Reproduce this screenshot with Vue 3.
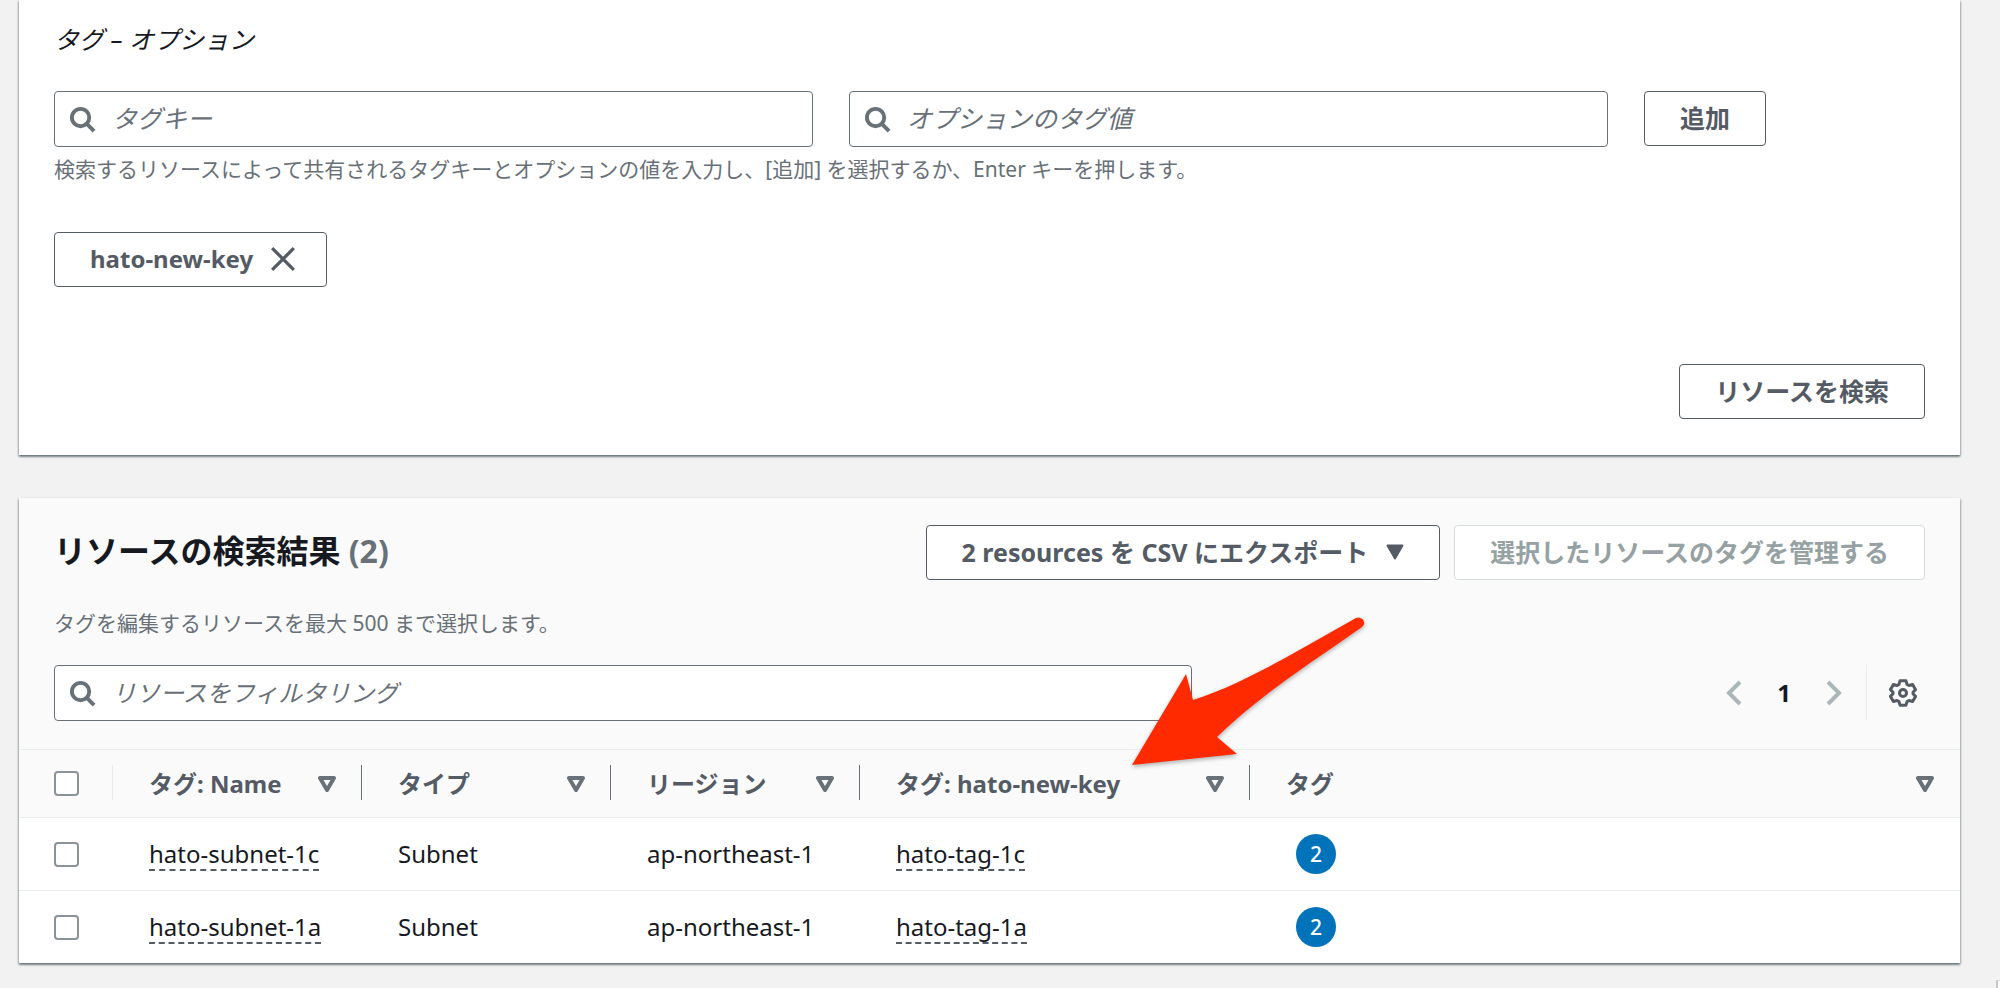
<script setup>
import { ref } from 'vue'

const tagKey = ref('')
const tagValue = ref('')
const filter = ref('')
const columns = ['タグ: Name', 'タイプ', 'リージョン', 'タグ: hato-new-key', 'タグ']
const rows = [
  { name: 'hato-subnet-1c', type: 'Subnet', region: 'ap-northeast-1', tag: 'hato-tag-1c', count: 2 },
  { name: 'hato-subnet-1a', type: 'Subnet', region: 'ap-northeast-1', tag: 'hato-tag-1a', count: 2 },
]
</script>

<template>
  <main class="page">
    <section class="panel search-panel">
      <h3 class="field-title">タグ – オプション</h3>
      <div class="tag-grid">
        <div class="field">
          <svg class="search-icon" viewBox="0 0 28 28" aria-hidden="true"><circle cx="12" cy="12" r="9" /><path d="M18.5 18.5L26 26" /></svg>
          <input v-model="tagKey" type="text" placeholder="タグキー" aria-label="タグキー" />
        </div>
        <div class="field">
          <svg class="search-icon" viewBox="0 0 28 28" aria-hidden="true"><circle cx="12" cy="12" r="9" /><path d="M18.5 18.5L26 26" /></svg>
          <input v-model="tagValue" type="text" placeholder="オプションのタグ値" aria-label="オプションのタグ値" />
        </div>
        <div><button type="button" class="btn">追加</button></div>
      </div>
      <p class="hint">検索するリソースによって共有されるタグキーとオプションの値を入力し、[追加] を選択するか、Enter キーを押します。</p>
      <button type="button" class="btn chip">
        hato-new-key
        <svg class="close-icon" viewBox="0 0 24 24" aria-hidden="true"><path d="M2 2L22 22M22 2L2 22" /></svg>
      </button>
      <div class="actions">
        <button type="button" class="btn">リソースを検索</button>
      </div>
    </section>

    <section class="panel results-panel">
      <header class="results-head">
        <div class="title-row">
          <h2>リソースの検索結果 <span class="counter">(2)</span></h2>
          <div class="buttons">
            <button type="button" class="btn">
              2 resources を CSV にエクスポート
              <svg class="caret" viewBox="0 0 18 16" aria-hidden="true"><path d="M1.5 1.5H16.5L9 14.5Z" /></svg>
            </button>
            <button type="button" class="btn" disabled>選択したリソースのタグを管理する</button>
          </div>
        </div>
        <p class="desc">タグを編集するリソースを最大 500 まで選択します。</p>
        <div class="tools">
          <div class="field filter">
            <svg class="search-icon" viewBox="0 0 28 28" aria-hidden="true"><circle cx="12" cy="12" r="9" /><path d="M18.5 18.5L26 26" /></svg>
            <input v-model="filter" type="text" placeholder="リソースをフィルタリング" aria-label="リソースをフィルタリング" />
          </div>
          <nav class="pager" aria-label="ページ">
            <button type="button" class="icon-btn" aria-label="前へ" disabled><svg class="chevron" viewBox="0 0 16 26" aria-hidden="true"><path d="M14 2L3 13L14 24" /></svg></button>
            <button type="button" class="icon-btn page-no">1</button>
            <button type="button" class="icon-btn" aria-label="次へ" disabled><svg class="chevron" viewBox="0 0 16 26" aria-hidden="true"><path d="M2 2L13 13L2 24" /></svg></button>
          </nav>
          <div class="settings">
            <button type="button" class="icon-btn" aria-label="設定">
              <svg class="gear" viewBox="0 0 28 28" aria-hidden="true">
                <path d="M11 1.800H17L18 5.400L20 6.500L23.600 5.500L26.500 10.600L24 13.200V14.800L26.500 17.400L23.600 22.500L20 21.500L18 22.600L17 26.200H11L10 22.600L8 21.500L4.400 22.500L1.500 17.400L4 14.800V13.200L1.500 10.600L4.400 5.500L8 6.500L10 5.400Z" />
                <circle cx="14" cy="14" r="3.500" />
              </svg>
            </button>
          </div>
        </div>
      </header>
      <table>
        <colgroup>
          <col class="c-check" /><col class="c-std" /><col class="c-std" /><col class="c-std" /><col class="c-tag" /><col />
        </colgroup>
        <thead>
          <tr>
            <th scope="col"><input type="checkbox" aria-label="すべて選択" /></th>
            <th v-for="label in columns" :key="label" scope="col">
              <div class="th">
                {{ label }}
                <svg class="sort" viewBox="0 0 18 16" aria-hidden="true"><path d="M2 2H16L9 14Z" /></svg>
              </div>
            </th>
          </tr>
        </thead>
        <tbody>
          <tr v-for="r in rows" :key="r.name">
            <td><input type="checkbox" :aria-label="r.name" /></td>
            <td><a href="#">{{ r.name }}</a></td>
            <td>{{ r.type }}</td>
            <td>{{ r.region }}</td>
            <td><a href="#">{{ r.tag }}</a></td>
            <td><span class="badge">{{ r.count }}</span></td>
          </tr>
        </tbody>
      </table>
      <svg class="arrow" viewBox="0 0 240 156" aria-hidden="true">
        <path d="M4 148L58 57L65 83C116 67 172 32 228 1C235 -1 239 6 234 10C180 48 132 78 89 120L109 137Z" />
      </svg>
    </section>
    <div class="corner-tab"></div>
  </main>
</template>

<style>
body {
  margin: 0;
  background: #f2f2f2;
}
</style>

<style scoped>
.page {
  padding: 0 40px 24px 19px;
  font-family: "Noto Sans", "Noto Sans CJK JP", sans-serif;
  font-size: 24px;
  line-height: 36px;
  color: #16191f;
}
.panel {
  position: relative;
  background: #fff;
  box-shadow: 0 2px 2px rgba(0, 28, 36, 0.4), 1px 1px 2px rgba(0, 28, 36, 0.2), -1px 1px 2px rgba(0, 28, 36, 0.2);
}
.search-panel {
  padding: 21px 35px 36px;
}
.field-title {
  margin: 0;
  font-size: 25px;
  font-weight: 400;
  font-style: italic;
}
.tag-grid {
  display: grid;
  grid-template-columns: 27fr 27fr 10fr;
  gap: 36px;
  margin-top: 34px;
}
.field {
  position: relative;
}
.field input {
  box-sizing: border-box;
  display: block;
  width: 100%;
  height: 56px;
  padding: 0 16px 2px 57px;
  border: 1px solid #687078;
  border-radius: 4px;
  background: #fff;
  font: inherit;
  font-size: 25px;
  color: #16191f;
}
.filter input {
  font-size: 24px;
}
.field input::placeholder {
  color: #687078;
  font-style: italic;
  opacity: 1;
}
.search-icon {
  position: absolute;
  left: 15px;
  top: 15px;
  width: 27px;
  height: 27px;
  fill: none;
  stroke: #687078;
  stroke-width: 4;
}
.hint,
.desc {
  margin: 0;
  font-size: 21px;
  line-height: 36px;
  color: #687078;
}
.hint {
  margin-top: 4px;
  margin-bottom: 45px;
}
.btn {
  box-sizing: border-box;
  display: inline-flex;
  align-items: center;
  height: 55px;
  padding: 0 35px 2px;
  border: 1px solid #545b64;
  border-radius: 4px;
  background: #fff;
  font: inherit;
  font-size: 25px;
  font-weight: 700;
  color: #545b64;
  white-space: nowrap;
}
.btn:disabled {
  border-color: #d5dbdb;
  color: #95a1a2;
}
.chip {
  padding-right: 30px;
  font-size: 24px;
}
.close-icon {
  width: 26px;
  height: 26px;
  margin-left: 17px;
  stroke: #545b64;
  stroke-width: 3;
}
.actions {
  display: flex;
  justify-content: flex-end;
  margin-top: 77px;
}
.results-panel {
  margin-top: 43px;
}
.results-head {
  padding: 27px 35px 28px;
  background: #fafafa;
  border-bottom: 1px solid #eaeded;
}
.title-row {
  display: flex;
  justify-content: space-between;
}
h2 {
  margin: 0;
  font-size: 32px;
  line-height: 52px;
  font-weight: 700;
}
.counter {
  color: #687078;
}
.buttons {
  display: flex;
  gap: 14px;
}
.caret {
  width: 18px;
  height: 16px;
  margin-left: 18px;
  fill: #545b64;
  stroke: #545b64;
  stroke-width: 2;
  stroke-linejoin: round;
}
.desc {
  margin-top: 25px;
}
.tools {
  display: flex;
  align-items: center;
  margin-top: 24px;
}
.filter {
  flex: 0 1 1138px;
}
.pager {
  display: flex;
  align-items: center;
  gap: 35px;
  margin-left: auto;
}
.icon-btn {
  display: flex;
  padding: 0;
  border: 0;
  background: none;
  font: inherit;
  color: #16191f;
}
.page-no {
  font-weight: 700;
}
.chevron {
  width: 16px;
  height: 26px;
  fill: none;
  stroke: #aab7b8;
  stroke-width: 4;
}
.settings {
  display: flex;
  align-items: center;
  height: 56px;
  margin-left: 24px;
  padding: 0 8px 0 22px;
  border-left: 1px solid #eaeded;
}
.gear {
  width: 28px;
  height: 28px;
  fill: none;
  stroke: #545b64;
  stroke-width: 3;
  stroke-linejoin: round;
}
table {
  width: 100%;
  table-layout: fixed;
  border-collapse: separate;
  border-spacing: 0;
}
.c-check {
  width: 94px;
}
.c-std {
  width: 249px;
}
.c-tag {
  width: 390px;
}
th,
td {
  box-sizing: border-box;
  padding: 0 0 0 36px;
  text-align: left;
  vertical-align: middle;
}
th:first-child,
td:first-child {
  padding-left: 35px;
}
th {
  position: relative;
  height: 68px;
  background: #fafafa;
  border-bottom: 1px solid #eaeded;
  color: #545b64;
  font-weight: 700;
}
th:not(:last-child)::after {
  content: "";
  position: absolute;
  right: 0;
  top: 15px;
  width: 1px;
  height: 35px;
  background: #687078;
}
th:first-child::after {
  background: #eaeded;
}
.th {
  display: flex;
  align-items: center;
  justify-content: space-between;
  padding-right: 26px;
}
.sort {
  width: 18px;
  height: 16px;
  fill: none;
  stroke: #687078;
  stroke-width: 4;
  stroke-linejoin: round;
}
td {
  height: 72px;
}
tbody tr:not(:last-child) td {
  height: 73px;
  border-bottom: 1px solid #eaeded;
}
input[type="checkbox"] {
  appearance: none;
  box-sizing: border-box;
  display: block;
  width: 25px;
  height: 25px;
  margin: 0;
  border: 2px solid #8a9398;
  border-radius: 4px;
  background: #fff;
}
td a {
  display: inline-block;
  line-height: 31px;
  color: #16191f;
  text-decoration: none;
  border-bottom: 2px dashed #545b64;
}
.badge {
  display: flex;
  align-items: center;
  justify-content: center;
  width: 40px;
  height: 40px;
  margin-left: 10px;
  border-radius: 50%;
  background: #0073bb;
  color: #fff;
  font-size: 21px;
  font-weight: 500;
}
.arrow {
  position: absolute;
  left: 1109px;
  top: 119px;
  width: 240px;
  height: 156px;
  overflow: visible;
  fill: #ff2a00;
  filter: drop-shadow(0 2px 2px rgba(0, 0, 0, 0.3));
}
.corner-tab {
  position: fixed;
  right: 0;
  bottom: 0;
  width: 2px;
  height: 7px;
  border-top: 1px solid #d5dbdb;
  border-left: 2px solid #c4c8c8;
  background: #fff;
}
</style>
